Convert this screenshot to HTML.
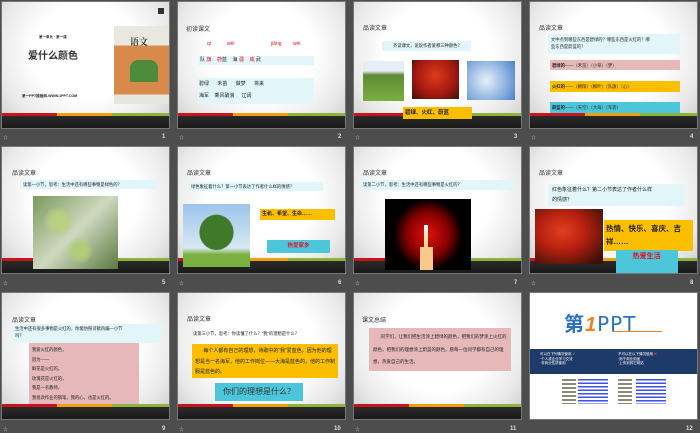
<!DOCTYPE html>
<html><head><meta charset="utf-8"><style>
*{margin:0;padding:0;box-sizing:border-box}
body{width:700px;height:433px;background:#4d4d4d;position:relative;overflow:hidden;font-family:"Liberation Sans","Noto Sans CJK SC",sans-serif;color:#222}
.s{position:absolute;width:167px;height:126px;overflow:hidden;background:radial-gradient(ellipse at 50% 40%,#fff 45%,#e9e9e9 75%,#c9c9c9 100%);outline:1px solid #777}
.st{position:absolute;left:0;top:111px;width:100%;height:3px;background:linear-gradient(90deg,#c8141c 0 33%,#f0a00c 33% 66%,#8cb43a 66%)}
.bar{position:absolute;left:0;top:114px;width:100%;height:12px;background:linear-gradient(#2a2a2a,#1a1a1a)}
.a{position:absolute;white-space:nowrap}
.h{position:absolute;left:9px;top:21px;font-size:6px;color:#333}
.t{font-size:4.3px;color:#222;line-height:7px}
.cy{background:#e2f6fa}
.pk{background:#e6b8ba}
.ye{background:#fbbf00}
.bl{background:#4cc6da}
.n{position:absolute;font-size:6px;color:#ddd;font-weight:bold}
.ic{position:absolute;font-size:5px;color:#bbb}
.r{color:#e8101c}
.lk{position:absolute;height:25px;background:repeating-linear-gradient(#3a50f0 0 1.5px,#fff 1.5px 3.5px)}
</style></head><body>

<!-- Slide 1 -->
<div class="s" style="left:2px;top:2px">
 <div class="a" style="left:37px;top:33px;font-size:3.5px;font-weight:bold">第一单元 · 第一课</div>
 <div class="a" style="left:26px;top:45px;font-size:10px;font-weight:bold;color:#333">爱什么颜色</div>
 <div class="a" style="left:20px;top:92px;font-size:3.6px;font-weight:bold">第一PPT模板网-WWW.1PPT.COM</div>
 <div class="a" style="left:112px;top:24px;width:56px;height:78px;background:linear-gradient(#e8e8e0 0 25%,#d88a4c 25% 88%,#e6e6e0 88%)"></div>
 <div class="a" style="left:128px;top:33px;font-size:9px;font-weight:bold;color:#333;font-family:'Noto Serif CJK SC',serif">语文</div>
 <div class="a" style="left:128px;top:58px;width:28px;height:22px;background:#4c8a3c;border-radius:8px 8px 2px 2px"></div>
 <div class="a" style="left:156px;top:6px;width:6px;height:6px;background:#333"></div>
 <div class="st"></div><div class="bar"></div>
</div>
<div class="ic" style="left:3px;top:134px">☆</div><div class="n" style="left:162px;top:134px">1</div>

<!-- Slide 2 -->
<div class="s" style="left:178px;top:2px">
 <div class="h" style="left:8px;top:22px">初读课文</div>
 <div class="a r" style="left:29px;top:39px;font-size:5px">qí</div>
 <div class="a r" style="left:49px;top:39px;font-size:5px">wēi</div>
 <div class="a r" style="left:93px;top:39px;font-size:5px">jiāng</div>
 <div class="a r" style="left:115px;top:39px;font-size:5px">wēi</div>
 <div class="a cy" style="left:20px;top:54px;width:116px;height:9px;font-size:5px;line-height:9px;padding-left:2px">队 <span class="r">旗</span>&nbsp;&nbsp;&nbsp;&nbsp;<span class="r">蔚</span>蓝&nbsp;&nbsp;&nbsp;&nbsp;海 <span class="r">疆</span>&nbsp;&nbsp;&nbsp;&nbsp;<span class="r">威</span> 武</div>
 <div class="a cy" style="left:20px;top:76px;width:116px;height:26px;font-size:5px;line-height:12px;padding-left:1px">碧绿&nbsp;&nbsp;&nbsp;&nbsp;&nbsp;&nbsp;禾苗&nbsp;&nbsp;&nbsp;&nbsp;&nbsp;&nbsp;做梦&nbsp;&nbsp;&nbsp;&nbsp;&nbsp;&nbsp;将来<br>海军&nbsp;&nbsp;&nbsp;&nbsp;乘风破浪&nbsp;&nbsp;&nbsp;&nbsp;&nbsp;辽阔</div>
 <div class="st"></div><div class="bar"></div>
</div>
<div class="ic" style="left:179px;top:134px">☆</div><div class="n" style="left:338px;top:134px">2</div>

<!-- Slide 3 -->
<div class="s" style="left:354px;top:2px">
 <div class="h">品读文章</div>
 <div class="a cy t" style="left:28px;top:39px;width:89px;height:10px;padding:1px 0 0 11px">齐读课文，说说作者爱哪三种颜色？</div>
 <div class="a" style="left:9px;top:59px;width:41px;height:40px;background:linear-gradient(#e4eef4 0 25%,#5e8a38 35%,#7ab03e)"></div>
 <div class="a" style="left:58px;top:58px;width:47px;height:39px;background:radial-gradient(circle at 50% 40%,#e03a1a,#a01810 60%,#3a1208)"></div>
 <div class="a" style="left:113px;top:59px;width:48px;height:39px;background:radial-gradient(circle at 40% 50%,#e8f0fa,#8ab0de 60%,#4a80c8)"></div>
 <div class="st"></div><div class="bar"></div>
 <div class="a ye" style="left:49px;top:105px;width:69px;height:12px;font-size:5.5px;font-weight:bold;line-height:12px;padding-left:2px">碧绿、火红、蔚蓝</div>
</div>
<div class="ic" style="left:355px;top:134px">☆</div><div class="n" style="left:514px;top:134px">3</div>

<!-- Slide 4 -->
<div class="s" style="left:530px;top:2px">
 <div class="h">品读文章</div>
 <div class="a cy t" style="left:18px;top:32px;width:132px;height:20px;padding:2px 0 0 3px">文中点到哪些东西是碧绿的？哪些东西是火红的？哪<br>些东西是蔚蓝的？</div>
 <div class="a pk t" style="left:20px;top:58px;width:130px;height:10px;padding:2px 0 0 2px"><b>碧绿的</b>——（禾苗）（小草）（梦）</div>
 <div class="a ye t" style="left:20px;top:79px;width:130px;height:11px;padding:2px 0 0 2px"><b>火红的</b>——（朝阳）（枫叶）（队旗）（心）</div>
 <div class="a bl t" style="left:20px;top:100px;width:130px;height:11px;padding:2px 0 0 2px"><b>蔚蓝的</b>——（天空）（大海）（军装）</div>
 <div class="st"></div><div class="bar"></div>
</div>
<div class="ic" style="left:531px;top:134px">☆</div><div class="n" style="left:690px;top:134px">4</div>

<!-- Slide 5 -->
<div class="s" style="left:2px;top:147px">
 <div class="h" style="left:10px">品读文章</div>
 <div class="a cy t" style="left:18px;top:33px;width:137px;height:9px;padding:1px 0 0 3px">读第一小节，思考：生活中还有哪些事物是绿色的？</div>
 <div class="st"></div><div class="bar"></div>
 <div class="a" style="left:31px;top:49px;width:85px;height:73px;background:radial-gradient(circle at 30% 35%,#b8d080 10%,transparent 20%),radial-gradient(circle at 55% 75%,#b0cc78 10%,transparent 19%),linear-gradient(135deg,#7a9a5a,#cfd8c0 50%,#5a7a40)"></div>
</div>
<div class="ic" style="left:3px;top:280px">☆</div><div class="n" style="left:162px;top:280px">5</div>

<!-- Slide 6 -->
<div class="s" style="left:178px;top:147px">
 <div class="h">品读文章</div>
 <div class="a cy t" style="left:10px;top:35px;width:135px;height:9px;padding:1px 0 0 3px">绿色象征着什么？第一小节表达了作者什么样的情感？</div>
 <div class="st"></div><div class="bar"></div>
 <div class="a" style="left:5px;top:57px;width:67px;height:63px;background:radial-gradient(ellipse at 50% 45%,#3e7a2a 35%,transparent 37%),linear-gradient(#9cc4ea,#d8e8f4 70%,#7ab040 80%)"></div>
 <div class="a ye" style="left:82px;top:62px;width:75px;height:11px;font-size:5px;font-weight:bold;line-height:11px;padding-left:2px">生机、希望、生命……</div>
 <div class="a bl" style="left:89px;top:93px;width:63px;height:13px;font-size:5.5px;font-weight:bold;line-height:13px;text-align:center;color:#e8101c">热爱家乡</div>
</div>
<div class="ic" style="left:179px;top:280px">☆</div><div class="n" style="left:338px;top:280px">6</div>

<!-- Slide 7 -->
<div class="s" style="left:354px;top:147px">
 <div class="h">品读文章</div>
 <div class="a cy t" style="left:8px;top:33px;width:152px;height:10px;padding:1px 0 0 1px">读第二小节，思考：生活中还有哪些事物是火红的？</div>
 <div class="st"></div><div class="bar"></div>
 <div class="a" style="left:31px;top:52px;width:86px;height:71px;background:radial-gradient(ellipse 40% 50% at 50% 50%,#e01010,#8a0000 60%,#000 100%)"></div>
 <div class="a" style="left:70px;top:78px;width:4px;height:25px;background:linear-gradient(#fff,#fc6)"></div>
 <div class="a" style="left:66px;top:100px;width:13px;height:23px;background:#f6c88a"></div>
</div>
<div class="ic" style="left:355px;top:280px">☆</div><div class="n" style="left:514px;top:280px">7</div>

<!-- Slide 8 -->
<div class="s" style="left:530px;top:147px">
 <div class="h">品读文章</div>
 <div class="a cy" style="left:18px;top:37px;width:137px;height:22px;font-size:5px;line-height:10px;padding:1px 0 0 4px">红色象征着什么？第二小节表达了作者什么样<br>的情感？</div>
 <div class="st"></div><div class="bar"></div>
 <div class="a" style="left:5px;top:62px;width:68px;height:55px;background:radial-gradient(ellipse at 40% 40%,#e04020,#b82010 40%,#3a1008 90%)"></div>
 <div class="a ye" style="left:74px;top:73px;width:89px;height:31px;font-size:7.5px;font-weight:bold;line-height:13px;padding:2px 0 0 2px;white-space:normal">热情、快乐、喜庆、吉祥……</div>
 <div class="a bl" style="left:86px;top:103px;width:62px;height:23px;font-size:7px;font-weight:bold;line-height:10px;padding:2px 0 0 3px;color:#e8101c;white-space:normal">&nbsp;&nbsp;&nbsp;&nbsp;&nbsp;&nbsp;&nbsp;热爱生活</div>
</div>
<div class="ic" style="left:531px;top:280px">☆</div><div class="n" style="left:690px;top:280px">8</div>

<!-- Slide 9 -->
<div class="s" style="left:2px;top:293px">
 <div class="h" style="left:10px;top:22px">品读文章</div>
 <div class="a cy t" style="left:10px;top:31px;width:150px;height:19px;padding:1px 0 0 3px">生活中还有很多事物是火红的，你能仿照诗歌再编一小节<br>吗？</div>
 <div class="a pk t" style="left:27px;top:50px;width:110px;height:68px;padding:2px 0 0 3px;line-height:9.5px">我爱火红的颜色，<br>因为——<br>鲜花是火红的，<br>玫瑰花是火红的，<br>我是一名教师，<br>我批改作业的钢笔，我的心，也是火红的。</div>
 <div class="st"></div><div class="bar"></div>
</div>
<div class="ic" style="left:3px;top:426px">☆</div><div class="n" style="left:162px;top:426px">9</div>

<!-- Slide 10 -->
<div class="s" style="left:178px;top:293px">
 <div class="h">品读文章</div>
 <div class="a t" style="left:15px;top:37px">读第三小节，思考：你读懂了什么？“我”的理想是什么？</div>
 <div class="a ye" style="left:14px;top:51px;width:146px;height:34px;font-size:5px;line-height:10.5px;padding:2px 2px 0 3px;white-space:normal">&nbsp;&nbsp;&nbsp;&nbsp;&nbsp;&nbsp;每个人都有自己的理想，诗歌中的“我”爱蓝色，因为他的理想是当一名海军，他的工作岗位——大海是蓝色的，他的工作制服是蓝色的。</div>
 <div class="a bl" style="left:37px;top:90px;width:88px;height:18px;font-size:8px;line-height:18px;text-align:center;color:#333">你们的理想是什么？</div>
 <div class="st"></div><div class="bar"></div>
</div>
<div class="ic" style="left:179px;top:426px">☆</div><div class="n" style="left:334px;top:426px">10</div>

<!-- Slide 11 -->
<div class="s" style="left:354px;top:293px">
 <div class="h" style="left:8px;top:22px">课文总结</div>
 <div class="a pk" style="left:15px;top:35px;width:142px;height:43px;font-size:4.5px;line-height:12.5px;padding:3px 2px 0 4px;white-space:normal">&nbsp;&nbsp;&nbsp;&nbsp;&nbsp;&nbsp;同学们，让我们把生活涂上碧绿的颜色，把我们的梦涂上火红的颜色，把我们的理想涂上蔚蓝的颜色，愿每一位同学都有自己的理想，热爱自己的生活。</div>
 <div class="st"></div><div class="bar"></div>
</div>
<div class="ic" style="left:355px;top:426px">☆</div><div class="n" style="left:510px;top:426px">11</div>

<!-- Slide 12 -->
<div class="s" style="left:530px;top:293px;background:#fff">
 <div class="a" style="left:34px;top:15px;font-size:20px;font-weight:bold;color:#2a72c0;letter-spacing:1px">第<span style="color:#f08018;font-style:italic">1</span><span style="font-family:'DejaVu Sans',sans-serif;font-weight:normal">PPT</span></div>
 <div class="a" style="left:82px;top:38px;width:50px;height:1px;background:#f08018"></div>
 <div class="a" style="left:0;top:56px;width:167px;height:25px;background:#1e3a68"></div>
 <div class="a" style="left:10px;top:59px;font-size:3.5px;color:#fff;line-height:4.5px">可以在下列情况使用 <span style="color:#6c6">✔</span><br>·个人或企业学习交流<br>·非商业性质使用</div>
 <div class="a" style="left:88px;top:59px;font-size:3.5px;color:#fff;line-height:4.5px">不可以在以下情况使用 <span style="color:#e33">✖</span><br>·用于商业用途<br>·上传到其它网站</div>
 <div class="a" style="left:32px;top:86px;width:14px;height:25px;background:repeating-linear-gradient(#8a8a7a 0 2px,#fff 2px 4px)"></div>
 <div class="lk" style="left:48px;top:86px;width:30px"></div>
 <div class="a" style="left:88px;top:86px;width:14px;height:25px;background:repeating-linear-gradient(#8a8a7a 0 2px,#fff 2px 4px)"></div>
 <div class="lk" style="left:106px;top:86px;width:30px"></div>
</div>
<div class="n" style="left:686px;top:426px">12</div>

</body></html>
